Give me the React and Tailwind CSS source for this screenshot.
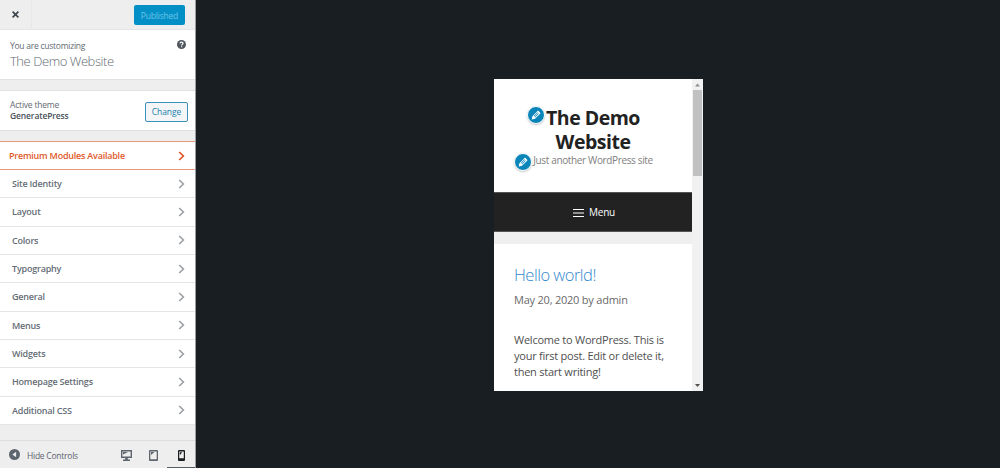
import React from 'react';

const SECTIONS = [
  'Site Identity',
  'Layout',
  'Colors',
  'Typography',
  'General',
  'Menus',
  'Widgets',
  'Homepage Settings',
  'Additional CSS',
];

function Chevron({ className }) {
  return (
    <svg className={`w-[7px] h-[10px] ${className}`} viewBox="0 0 7 10" fill="none" stroke="currentColor" strokeWidth="1.6">
      <path d="M1.2 1 5.4 5 1.2 9" />
    </svg>
  );
}

function EditShortcut({ className }) {
  return (
    <button
      type="button"
      className={`absolute flex h-[18px] w-[18px] items-center justify-center rounded-full border border-white bg-[#0a85ba] shadow-[0_1px_2px_rgba(46,68,83,0.3)] ${className}`}
    >
      <svg className="h-[12px] w-[12px] shrink-0" viewBox="0 0 20 20" fill="#fff">
        <path d="M13.9 3.1 16.9 6.1C17.5 6.7 17.5 7.2 16.9 7.8L8.4 16.3 2.8 17.5 4 11.9 12.6 3.3C13.1 2.7 13.4 2.6 13.9 3.1ZM6.2 11.6 7 12.4 13 6.4 12.2 5.6ZM7.8 13.2 8.6 14 14.6 8 13.8 7.2Z" fillRule="evenodd" />
      </svg>
    </button>
  );
}

function Header() {
  return (
    <div className="flex h-[30px] shrink-0 items-center justify-between border-b border-[#e4e5e6] pr-[10px]">
      <button type="button" className="flex h-full w-8 items-center justify-center border-r border-[#e6e7e8]">
        <svg className="h-[7px] w-[7px]" viewBox="0 0 7 7" stroke="#3c434a" strokeWidth="1.6">
          <path d="M.6.6 6.4 6.4M6.4.6.6 6.4" />
        </svg>
      </button>
      <button type="button" className="mt-px h-5 w-[51px] rounded-xs bg-[#0490c7] pt-px text-[8.5px] leading-[19px] tracking-[-0.2px] text-[#6bc3e6]">
        Published
      </button>
    </div>
  );
}

function Intro() {
  return (
    <div className="flex h-[50px] shrink-0 justify-between border-b border-[#e0e1e2] bg-white pt-[9px] pr-[9px] pl-[10px]">
      <div className="text-[#646b73]">
        <p className="text-[8.5px] leading-[13px] tracking-[-0.25px]">You are customizing</p>
        <h1 className="mt-px text-[13px] leading-4 font-light tracking-[-0.45px]">The Demo Website</h1>
      </div>
      <svg className="mt-px h-[9px] w-[9px]" viewBox="0 0 10 10">
        <circle cx="5" cy="5" r="5" fill="#50575e" />
        <path d="M3.3 3.7C3.5 1.8 6.8 1.9 6.7 3.8 6.6 4.9 5.1 4.9 5.1 6.2M5.1 6.9V8.1" fill="none" stroke="#fff" strokeWidth="1.3" />
      </svg>
    </div>
  );
}

function ActiveTheme() {
  return (
    <div className="mt-[10px] flex h-[41px] shrink-0 items-center justify-between border-y border-[#e0e1e2] bg-white pr-[7px] pl-[10px] text-[#646b73]">
      <div className="-mt-px text-[8.5px] leading-[11px]">
        <p className="tracking-[-0.2px]">Active theme</p>
        <p className="font-semibold tracking-[-0.13px] text-[#4a525a]">GeneratePress</p>
      </div>
      <button type="button" className="mt-[2px] h-5 w-[43px] rounded-xs border border-[#3b93bb] bg-[#f3f5f6] text-[8.5px] leading-[18px] tracking-[-0.1px] text-[#1b7fad]">
        Change
      </button>
    </div>
  );
}

function Footer() {
  return (
    <div className="mt-auto flex h-7 shrink-0 items-center border-t border-[#dcdddf] pl-[9px] text-[#5d656e]">
      <svg className="h-[11px] w-[11px]" viewBox="0 0 10 10">
        <circle cx="5" cy="5" r="5" fill="currentColor" />
        <path d="M6.5 2.5v5L3 5z" fill="#eee" />
      </svg>
      <span className="mt-[3px] ml-[7px] text-[8.5px] tracking-[-0.25px]">Hide Controls</span>
      <div className="ml-auto flex h-full">
        <button type="button" className="flex w-[27px] items-center justify-center pt-px">
          <svg className="h-[11px] w-[11px]" viewBox="0 0 11 11">
            <path d="M0 0h11v8H6.8v1.4H9V11H2V9.4h2.2V8H0zM1.4 1.4v5.1h8.2V1.4z" fill="currentColor" fillRule="evenodd" />
            <path d="M2 2h5L2 4.5z" fill="currentColor" />
          </svg>
        </button>
        <button type="button" className="flex w-[27px] items-center justify-center pt-px">
          <svg className="h-[11px] w-[9px]" viewBox="0 0 9 11">
            <path d="M1 0h7q1 0 1 1v9q0 1-1 1H1q-1 0-1-1V1q0-1 1-1zM1.3 1.4v7.9h6.4V1.4z" fill="currentColor" fillRule="evenodd" />
            <path d="M2 2h3.5L2 5z" fill="currentColor" />
          </svg>
        </button>
        <button type="button" className="flex w-7 items-center justify-center border-b-[1.5px] border-[#555d66] pt-[2px] text-[#191e23]">
          <svg className="h-[11px] w-[7px]" viewBox="0 0 7 11">
            <path d="M1 0h5q1 0 1 1v9q0 1-1 1H1q-1 0-1-1V1q0-1 1-1zM1.2 1.6v6.6h4.6V1.6z" fill="currentColor" fillRule="evenodd" />
            <path d="M1.8 2.2h2.4l-2.4 3z" fill="currentColor" />
          </svg>
        </button>
      </div>
    </div>
  );
}

function Sidebar() {
  return (
    <aside className="flex h-full w-[196px] shrink-0 flex-col border-r border-[#9a9ea1] bg-[#eee]">
      <Header />
      <Intro />
      <ActiveTheme />
      <ul className="mt-[10px] text-[9px] font-semibold text-[#656d76]">
        <li className="flex h-[29px] items-center justify-between border-y border-[#e89878] bg-white pr-[10px] pl-[9px] text-[#e0592c]">
          <span className="tracking-[-0.22px]">Premium Modules Available</span>
          <Chevron className="text-[#dd5020]" />
        </li>
        {SECTIONS.map((name) => (
          <li key={name} className="flex h-[28.35px] items-center justify-between border-b border-[#e4e5e6] bg-white pr-[10px] pl-3">
            <span className="tracking-[-0.2px]">{name}</span>
            <Chevron className="text-[#9ba0a5]" />
          </li>
        ))}
      </ul>
      <Footer />
    </aside>
  );
}

function Scrollbar() {
  return (
    <div className="flex w-[11px] shrink-0 flex-col items-center bg-[#f1f1f1]">
      <svg className="h-[11px] w-[5px]" viewBox="0 0 5 11">
        <path d="M0 7.5h5L2.5 4.5z" fill="#909090" />
      </svg>
      <div className="h-[86px] w-[9px] bg-[#c1c1c1]" />
      <svg className="mt-auto h-[11px] w-[5px]" viewBox="0 0 5 11">
        <path d="M0 4h5L2.5 7z" fill="#505050" />
      </svg>
    </div>
  );
}

function PhonePreview() {
  return (
    <div className="mt-[79px] ml-[298px] flex h-[312px] w-[209px] overflow-hidden bg-[#efefef]">
      <div className="flex w-[198px] flex-col">
        <header className="h-[113px] bg-white pt-[27px] text-center">
          <h2 className="relative text-[19.5px] leading-[24px] font-bold tracking-[-0.5px] text-[#222]">
            The Demo
            <br />
            Website
            <EditShortcut className="top-0 left-[33px]" />
          </h2>
          <p className="relative text-[10px] leading-[13px] tracking-[-0.36px] text-[#808080]">
            Just another WordPress site
            <EditShortcut className="-top-px left-5" />
          </p>
        </header>
        <nav className="flex h-10 items-center justify-center gap-[5px] border-y border-[#555] bg-[#222] pt-px pl-[2px] text-[10px] text-white">
          <svg className="h-[8px] w-[11px]" viewBox="0 0 11 8" stroke="#fff" strokeWidth="1">
            <path d="M0 .5h11M0 4h11M0 7.5h11" />
          </svg>
          <span className="font-medium tracking-[-0.2px]">Menu</span>
        </nav>
        <article className="mt-3 grow bg-white px-5 pt-5 text-[#505050]">
          <h2 className="text-[16.5px] leading-[22px] font-light tracking-[-0.5px] text-[#3388cc]">Hello world!</h2>
          <p className="mt-[6px] text-[11px] leading-4 tracking-[-0.22px] text-[#6a6a6a]">May 20, 2020 by admin</p>
          <p className="mt-6 text-[11px] leading-4 tracking-[-0.24px] whitespace-nowrap">
            Welcome to WordPress. This is
            <br />
            your first post. Edit or delete it,
            <br />
            then start writing!
          </p>
        </article>
      </div>
      <Scrollbar />
    </div>
  );
}

export default function App() {
  return (
    <div className="flex h-[468px] w-[1000px] overflow-hidden bg-[#191e23] font-['Open_Sans','Noto_Sans',sans-serif]">
      <Sidebar />
      <main className="grow">
        <PhonePreview />
      </main>
    </div>
  );
}
